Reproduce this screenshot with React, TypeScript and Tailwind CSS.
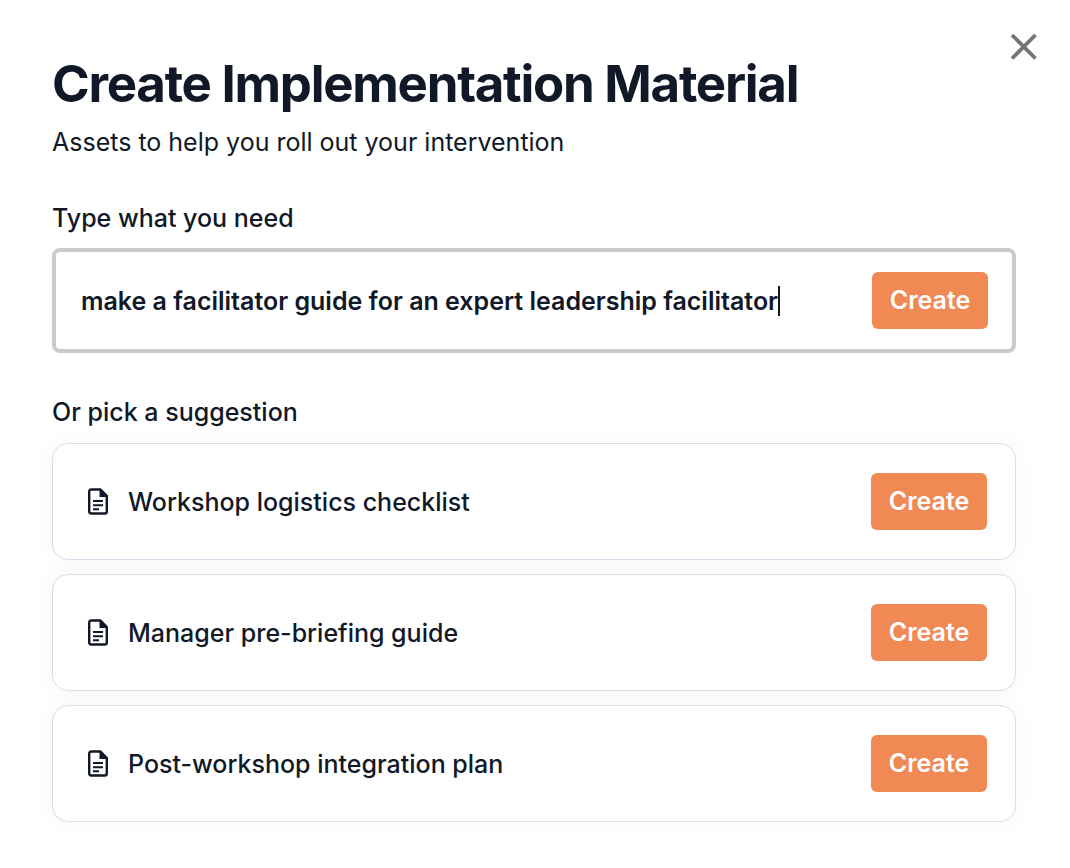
import { useState } from "react";
import type { ButtonHTMLAttributes } from "react";
import clsx from "clsx";

interface Suggestion {
  id: string;
  title: string;
}

const suggestions: Suggestion[] = [
  { id: "logistics", title: "Workshop logistics checklist" },
  { id: "briefing", title: "Manager pre-briefing guide" },
  { id: "integration", title: "Post-workshop integration plan" },
];

function CloseIcon() {
  return (
    <svg className="h-7 w-7" viewBox="0 0 28 28" fill="none" aria-hidden="true">
      <path d="M2 2L25.5 25.5M25.5 2L2 25.5" stroke="currentColor" strokeWidth={3.8} />
    </svg>
  );
}

function DocumentIcon() {
  return (
    <svg className="h-7 w-5 shrink-0" viewBox="0 0 20 28" fill="none" aria-hidden="true">
      <path
        d="M3 1.5H12.5L18.8 8V23.5Q18.8 25.5 16.8 25.5H3.2Q1.2 25.5 1.2 23.5V3.5Q1.2 1.5 3.2 1.5Z"
        stroke="currentColor"
        strokeWidth={2.4}
        strokeLinejoin="round"
      />
      <path d="M11.5 1H13L19.5 7.5V9H11.5Z" fill="currentColor" />
      <path d="M5 13H15M5 17.2H15M5 21.2H11" stroke="currentColor" strokeWidth={1.9} />
    </svg>
  );
}

function CreateButton({ className, ...props }: ButtonHTMLAttributes<HTMLButtonElement>) {
  return (
    <button
      type="button"
      className={clsx(
        "h-[57px] w-[116px] shrink-0 rounded-md bg-[#f08954] text-[25px] font-semibold text-white transition-colors hover:bg-[#e67a42]",
        className
      )}
      {...props}
    >
      Create
    </button>
  );
}

function SuggestionCard({ suggestion }: { suggestion: Suggestion }) {
  return (
    <li className="flex h-[117px] items-center gap-5 rounded-2xl border border-[#d9dcec] bg-white pr-7 pl-[35px] shadow-[0_0_24px_rgba(0,0,0,0.04)]">
      <DocumentIcon />
      <span className="flex-1 text-[25px] leading-8 font-medium">{suggestion.title}</span>
      <CreateButton aria-label={`Create ${suggestion.title}`} />
    </li>
  );
}

export default function App() {
  const [prompt, setPrompt] = useState(
    "make a facilitator guide for an expert leadership facilitator"
  );

  return (
    <main className="relative min-h-screen bg-white px-[52px] pt-[52px] pb-11 font-['Inter',sans-serif] text-[#111827]">
      {/* Close button sits over the top right corner */}
      <button
        type="button"
        aria-label="Close"
        className="absolute top-[33px] right-8 text-[#757575] hover:text-[#111827]"
      >
        <CloseIcon />
      </button>

      <h1 className="text-[51px] leading-[64px] font-bold tracking-tight">
        Create Implementation Material
      </h1>
      <p className="mt-2.5 text-[25px] leading-8">Assets to help you roll out your intervention</p>

      <form className="mt-11" onSubmit={(e) => e.preventDefault()}>
        <label htmlFor="prompt" className="block text-[25px] leading-8 font-medium">
          Type what you need
        </label>
        <div className="mt-3.5 mr-0.5 flex h-[105px] items-center rounded-lg border-4 border-[#cbcbcb] pr-6 pl-[25px]">
          <input
            id="prompt"
            type="text"
            value={prompt}
            onChange={(e) => setPrompt(e.target.value)}
            className="field-sizing-content min-w-0 text-[25px] leading-8 font-semibold caret-transparent outline-none"
          />
          <span className="h-[30px] w-0.5 shrink-0 bg-[#111827]" />
          <CreateButton type="submit" className="ml-auto" />
        </div>
      </form>

      <section className="mt-[43px] mr-0.5">
        <h2 className="text-[25px] leading-8 font-medium">Or pick a suggestion</h2>
        <ul className="mt-[15px] flex flex-col gap-3.5">
          {suggestions.map((suggestion) => (
            <SuggestionCard key={suggestion.id} suggestion={suggestion} />
          ))}
        </ul>
      </section>
    </main>
  );
}
